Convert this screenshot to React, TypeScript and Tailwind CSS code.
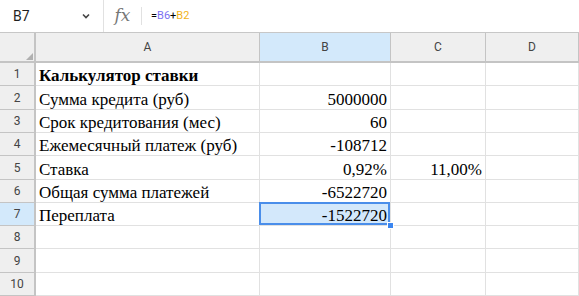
import React from "react";

type Cell = { text?: string; bold?: boolean; right?: boolean };

const rows: Cell[][] = [
  [{ text: "Калькулятор ставки", bold: true }, {}, {}, {}],
  [{ text: "Сумма кредита (руб)" }, { text: "5000000", right: true }, {}, {}],
  [{ text: "Срок кредитования (мес)" }, { text: "60", right: true }, {}, {}],
  [{ text: "Ежемесячный платеж (руб)" }, { text: "-108712", right: true }, {}, {}],
  [{ text: "Ставка" }, { text: "0,92%", right: true }, { text: "11,00%", right: true }, {}],
  [{ text: "Общая сумма платежей" }, { text: "-6522720", right: true }, {}, {}],
  [{ text: "Переплата" }, { text: "-1522720", right: true }, {}, {}],
  [{}, {}, {}, {}],
  [{}, {}, {}, {}],
  [{}, {}, {}, {}],
];

const heights = [23, 24, 23, 23, 24, 23, 23, 23, 24, 23];
const cols = ["A", "B", "C", "D"];
const gridCols = "grid grid-cols-[36px_224px_131px_95px_1fr]";

export default function App() {
  return (
    <div className="h-[296px] w-[579px] overflow-hidden bg-white font-['Roboto',sans-serif]">
      {/* formula bar */}
      <div className="flex h-[33px] items-center border-b border-[#c7c7c7]">
        <div className="flex h-full w-[104px] items-center border-r border-[#e1e1e1] pl-[13px] pr-[10px]">
          <span className="flex-1 text-[14px] text-[#1f1f1f]">B7</span>
          <svg width="10" height="10" viewBox="0 0 10 10" className="mr-[2px]">
            <path d="M2 3.5 L5 6.5 L8 3.5" fill="none" stroke="#444" strokeWidth="1.6" />
          </svg>
        </div>
        <div className="flex h-full w-[37px] items-center justify-center">
          <span className="font-['DejaVu_Serif',serif] text-[17px] italic text-[#777]">fx</span>
        </div>
        <div className="h-[18px] w-px bg-[#e1e1e1]" />
        <div className="pl-[9px] text-[11px] text-[#000]">
          =<span className="text-[#7b6ff2]">B6</span>+<span className="text-[#f2b21a]">B2</span>
        </div>
      </div>

      {/* column headers */}
      <div className={`${gridCols} h-[30px] border-b-2 border-[#c4c4c4] text-[12px] text-[#444]`}>
        <div className="relative border-r-2 border-[#c4c4c4] bg-[#efefef]">
          <div className="absolute bottom-[1px] right-[1px] h-0 w-0 border-b-[7px] border-l-[7px] border-b-[#b0b0b0] border-l-transparent" />
        </div>
        {cols.map((c) => (
          <div
            key={c}
            className={`flex items-center justify-center border-r border-[#c4c4c4] ${c === "B" ? "bg-[#d3e9fb]" : "bg-[#efefef]"}`}
          >
            {c}
          </div>
        ))}
      </div>

      {/* rows */}
      {rows.map((row, i) => (
        <div key={i} className={gridCols} style={{ height: heights[i] }}>
          <div
            className={`flex items-center justify-center border-r-2 border-b border-[#c4c4c4] text-[12px] text-[#444] ${i === 6 ? "bg-[#d3e9fb]" : "bg-[#efefef]"}`}
          >
            {i + 1}
          </div>
          {row.map((cell, j) => {
            const selected = i === 6 && j === 1;
            return (
              <div
                key={j}
                className={`relative flex items-end overflow-visible whitespace-nowrap border-r border-b border-[#e1e1e1] px-[3px] font-['Liberation_Serif',serif] text-[17px] leading-[20px] text-black ${cell.right ? "justify-end" : "justify-start"} ${cell.bold ? "font-bold" : ""} ${selected ? "bg-[#d3e8fb]" : ""}`}
              >
                {selected && (
                  <>
                    <div className="pointer-events-none absolute -left-px -top-px bottom-0 right-0 border-2 border-[#4a8eea]" />
                    <div className="absolute -bottom-[4px] -right-[4px] z-10 h-[7px] w-[7px] border border-white bg-[#3b86f0]" />
                  </>
                )}
                <span className="relative -mb-[1px]">{cell.text}</span>
              </div>
            );
          })}
        </div>
      ))}
    </div>
  );
}
